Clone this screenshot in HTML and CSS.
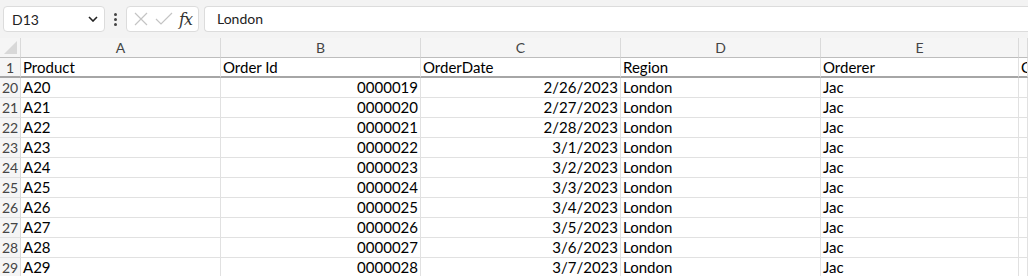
FILE: index.html
```html
<!DOCTYPE html>
<html lang="en">
<head>
  <meta charset="UTF-8" />
  <title>Sheet</title>
  <link rel="stylesheet" href="styles.css">
</head>
<body>
  <div class="toolbar">
    <div class="namebox">
      <span>D13</span>
      <svg class="chev" width="10" height="6" viewBox="0 0 10 6"><path d="M1 1 L5 5 L9 1" fill="none" stroke="#222" stroke-width="1.6"/></svg>
    </div>
    <div class="dots"><i></i><i></i><i></i></div>
    <div class="fxbox">
      <svg width="16" height="16" viewBox="0 0 16 16"><path d="M2 2 L14 14 M14 2 L2 14" stroke="#c4c4c4" stroke-width="1.2"/></svg>
      <svg width="18" height="16" viewBox="0 0 18 16"><path d="M1 8 L6 13 L17 2" fill="none" stroke="#c4c4c4" stroke-width="1.2"/></svg>
      <span class="fx">fx</span>
    </div>
    <div class="formula">London</div>
  </div>

  <div class="sheet">
    <div class="row head">
      <div class="corner"><svg width="13" height="13" viewBox="0 0 13 13"><path d="M13 0 L13 13 L0 13 Z" fill="#d8d8d8"/></svg></div>
      <div class="col">A</div><div class="col">B</div><div class="col">C</div><div class="col">D</div><div class="col">E</div><div class="col last"></div>
    </div>
    <div class="row first">
      <div class="num">1</div><div class="cell">Product</div><div class="cell">Order Id</div><div class="cell">OrderDate</div><div class="cell">Region</div><div class="cell">Orderer</div><div class="cell">C</div>
    </div>
    <div id="rows"></div>
  </div>

  <script>
    const rows = document.getElementById('rows');
    const dates = ['2/26/2023','2/27/2023','2/28/2023','3/1/2023','3/2/2023','3/3/2023','3/4/2023','3/5/2023','3/6/2023','3/7/2023'];
    for (let i = 0; i < 10; i++) {
      const r = document.createElement('div');
      r.className = 'row';
      const id = String(19 + i).padStart(7, '0');
      r.innerHTML = `<div class="num">${20 + i}</div><div class="cell">A${20 + i}</div>` +
        `<div class="cell right">${id}</div><div class="cell right">${dates[i]}</div>` +
        `<div class="cell">London</div><div class="cell">Jac</div><div class="cell"></div>`;
      rows.appendChild(r);
    }
  </script>
</body>
</html>
```
FILE: styles.css
```css
* {
  margin: 0;
  padding: 0;
  box-sizing: border-box;
}
html, body {
  width: 100%;
  height: 100%;
  overflow: hidden;
  background: #fff;
  font-family: "Lato", "Liberation Sans", sans-serif;
  font-size: 15px;
  color: #000;
}

.toolbar {
  display: flex;
  align-items: center;
  height: 38px;
  padding: 0 0 0 3px;
  background: #f3f3f3;
}

.namebox {
  display: flex;
  align-items: center;
  justify-content: space-between;
  width: 102px;
  height: 26px;
  padding: 0 6px 0 8px;
  background: #fff;
  border: 1px solid #dcdcdc;
  border-radius: 4px;
  font-size: 14px;
  color: #222;
}

.dots {
  display: flex;
  flex-direction: column;
  gap: 2px;
  width: 21px;
  align-items: center;
}
.dots i {
  width: 3px;
  height: 3px;
  border-radius: 50%;
  background: #444;
}

.fxbox {
  display: flex;
  align-items: center;
  gap: 6px;
  width: 73px;
  height: 26px;
  padding: 0 4px 0 6px;
  background: #fff;
  border: 1px solid #dcdcdc;
  border-radius: 4px;
}
.fx {
  font-family: "DejaVu Serif", "Liberation Serif", serif;
  font-style: italic;
  font-size: 16px;
  color: #333;
  letter-spacing: -1px;
}

.formula {
  flex: 1;
  height: 26px;
  margin-left: 5px;
  padding: 0 12px;
  line-height: 24px;
  background: #fff;
  border: 1px solid #dcdcdc;
  border-right: none;
  border-radius: 4px 0 0 4px;
  font-size: 14px;
  color: #222;
}

.row {
  display: grid;
  grid-template-columns: 21px 200px 200px 200px 200px 198px 1fr;
  height: 20px;
}
.row > div {
  border-right: 1px solid #e1e1e1;
  border-bottom: 1px solid #e1e1e1;
  line-height: 19px;
  white-space: nowrap;
  overflow: hidden;
}

.head {
  background: #f5f5f5;
}
.head > div {
  border-right: 1px solid #dadada;
  border-bottom: 1px solid #bdbdbd;
}
.corner {
  display: flex;
  align-items: flex-end;
  justify-content: flex-end;
  padding: 0 3px 3px 0;
}
.col {
  text-align: center;
  font-size: 14px;
  color: #444;
}

.first > div {
  border-bottom: 2px solid #a6a6a6;
}

.num {
  background: #f5f5f5;
  text-align: center;
  font-size: 14px;
  color: #444;
  border-right-color: #dadada !important;
}

.cell {
  padding: 0 2px 0 2px;
}
.right {
  text-align: right;
}
```
